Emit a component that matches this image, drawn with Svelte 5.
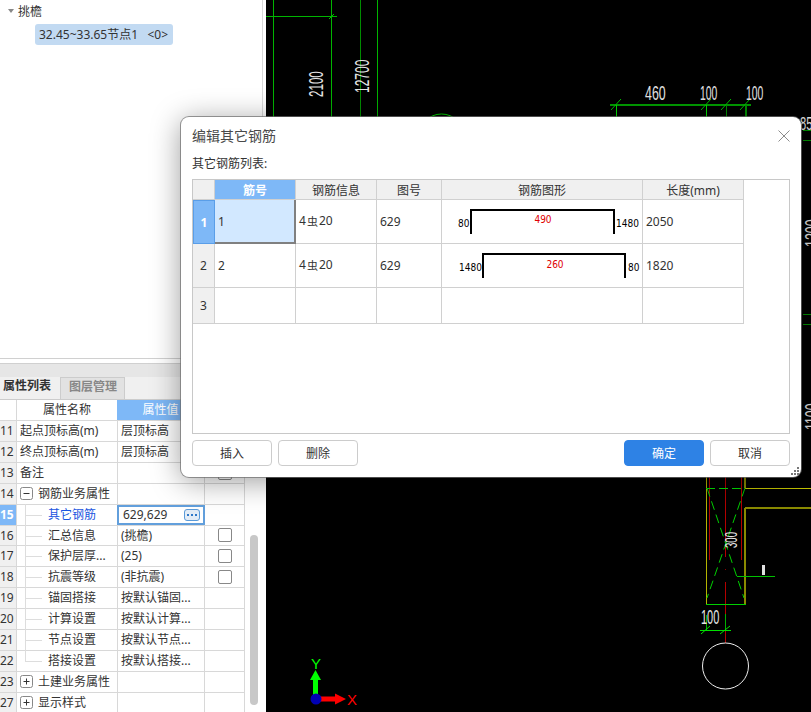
<script>
  const props = [
    { no: 11, name: '起点顶标高(m)', val: '层顶标高' },
    { no: 12, name: '终点顶标高(m)', val: '层顶标高' },
    { no: 13, name: '备注', val: '', check: true },
    { no: 14, group: '钢筋业务属性', open: true },
    { no: 15, sub: '其它钢筋', val: '629,629', active: true },
    { no: 16, sub: '汇总信息', val: '(挑檐)', check: true },
    { no: 17, sub: '保护层厚...', val: '(25)', check: true },
    { no: 18, sub: '抗震等级', val: '(非抗震)', check: true },
    { no: 19, sub: '锚固搭接', val: '按默认锚固...' },
    { no: 20, sub: '计算设置', val: '按默认计算...' },
    { no: 21, sub: '节点设置', val: '按默认节点...' },
    { no: 22, sub: '搭接设置', val: '按默认搭接...', last: true },
    { no: 23, group: '土建业务属性' },
    { no: 27, group: '显示样式' }
  ]

  const bars = [
    { no: 1, id: '1', pic: '629', len: '2050', x1: 29, x2: 172, left: '80', lx: 16, right: '1480', rx: 174, mid: '490', mx: 101, my: 23 },
    { no: 2, id: '2', pic: '629', len: '1820', x1: 41, x2: 183, left: '1480', lx: 17, right: '80', rx: 186, mid: '260', mx: 113, my: 24 }
  ]

  // cad labels, x/y are page coordinates of the baseline start
  const labels = [
    { t: '2100', x: 323, y: 97, rot: true, sx: 0.58 },
    { t: '12700', x: 369, y: 93, rot: true, sx: 0.6 },
    { t: '460', x: 645, y: 100, sx: 0.62 },
    { t: '100', x: 700, y: 100, sx: 0.52 },
    { t: '100', x: 746, y: 100, sx: 0.52 },
    { t: '100', x: 701, y: 624, sx: 0.55 },
    { t: '300', x: 737, y: 548, rot: true, size: 16, sx: 0.6 },
    { t: '85', x: 800, y: 130, size: 18, sx: 0.62 },
    { t: '1200', x: 819, y: 247, rot: true, sx: 0.62 },
    { t: '1100', x: 819, y: 430, rot: true, sx: 0.62 }
  ]

  const ticks = [616, 706, 726, 745]
</script>

<div class="app">
  <aside class="side">
    <div class="tree">
      <div class="tree-root"><i class="tri"></i>挑檐</div>
      <div class="tree-item">32.45~33.65节点1&nbsp;&nbsp;&nbsp;&lt;0&gt;</div>
    </div>

    <div class="split"></div>

    <div class="tabs">
      <div class="tab on">属性列表</div>
      <div class="tab">图层管理</div>
    </div>

    <div class="props">
      <div class="prop-table">
        <div class="prow head">
          <div class="no"></div>
          <div class="name center">属性名称</div>
          <div class="val center sel">属性值</div>
          <div class="chk"></div>
        </div>
        {#each props as p}
          <div class="prow">
            <div class="no" class:cur={p.active}>{p.no}</div>
            {#if p.group}
              <div class="name grp">
                <span class="box">
                  <svg width="13" height="13" viewBox="0 0 13 13">
                    <rect x=".5" y=".5" width="12" height="12" rx="2" fill="#fff" stroke="#888" />
                    <path d="M3.5 6.5h6" stroke="#333" />
                    {#if !p.open}<path d="M6.5 3.5v6" stroke="#333" />{/if}
                  </svg>
                </span>
                {p.group}
              </div>
            {:else if p.sub}
              <div class="name subname" class:link={p.active}>
                <span class="vline" class:end={p.last}></span><span class="hline"></span>{p.sub}
              </div>
            {:else}
              <div class="name">{p.name}</div>
            {/if}
            <div class="val" class:editing={p.active}>
              {p.val || ''}
              {#if p.active}
                <span class="more"><b></b><b></b><b></b></span>
              {/if}
            </div>
            <div class="chk">{#if p.check}<span class="check"></span>{/if}</div>
          </div>
        {/each}
      </div>
      <div class="track"></div>
    </div>
  </aside>

  <main class="canvas">
    <svg width="545" height="712" viewBox="266 0 545 712" shape-rendering="crispEdges">
      <g fill="none" stroke="#00b400">
        <path d="M273.5 0v117M331.5 0v117M377.5 0v117M266 16.5h71" />
        <path d="M360.5 0v117" stroke="#008c00" />
        <path d="M610 104.500h141" stroke="#009c00" stroke-width="2" />
        <path d="M616.500 105v12M706.500 105v12" stroke="#00e000" />
        <path d="M726.500 105v12" stroke="#009000" />
        <path d="M745.500 105v12" stroke="#009000" stroke-width="2" />
        <circle cx="441.500" cy="137" r="23" stroke="#00d000" shape-rendering="auto" />
        {#each ticks as x}
          <path d="M{x - 5} 110l10-11" stroke="#00c000" shape-rendering="auto" />
        {/each}
        <path d="M329 19l5-5" stroke="#00c000" shape-rendering="auto" />
        <path d="M803 130.500h8M803 140.500h8M803 314.500h8M803 324.500h8" stroke="#009000" />
      </g>

      <!-- column at the bottom right -->
      <g fill="none">
        <path d="M706.500 470v134" stroke="#b4b400" />
        <path d="M745 470v18M745 508v96" stroke="#8a8a00" stroke-width="2" />
        <path d="M745 488.500h66" stroke="#c8c800" />
        <path d="M745 508h66" stroke="#8a8a00" stroke-width="2" />
        <path d="M709.500 470v90M741.500 470v90M725.500 470v87M725.500 582v22M725.500 605v9M725.500 630v13" stroke="#b40000" />
        <path d="M725.500 569v1" stroke="#900000" />
        <path d="M706 488.500h39" stroke="#00e000" stroke-dasharray="9 4" />
        <path d="M707 488l37 110M745 488l-38 110" stroke="#00d000" stroke-dasharray="9 5" shape-rendering="auto" />
        <path d="M706 604.500h40" stroke="#00d000" />
        <path d="M737 576.500h38" stroke="#00c000" />
        <path d="M763.500 565v10" stroke="#e0e0e0" stroke-width="3" />
        <path d="M700 630.500h31" stroke="#00e000" />
        <path d="M706.500 615v15M725.500 614v16" stroke="#00b000" />
        <path d="M701 634l9-8M720 634l10-8" stroke="#00e000" shape-rendering="auto" />
        <circle cx="725.500" cy="666" r="23" stroke="#eee" shape-rendering="auto" />
      </g>

      {#each labels as l}
        <text
          class="cad"
          font-size={l.size || 20}
          transform="translate({l.x} {l.y}) {l.rot ? 'rotate(-90)' : ''} scale({l.sx} 1)">{l.t}</text>
      {/each}

      <!-- axis gizmo -->
      <g shape-rendering="auto">
        <path d="M313 699v-19h-3l5.500-10 5.500 10h-3v19z" fill="#00ff00" />
        <path d="M316 696.500h19v-3l11 5.500-11 5.500v-3h-19z" fill="#ff0000" />
        <circle cx="316" cy="699" r="5.500" fill="#0000b4" />
        <text class="axis" x="311" y="669" fill="#00ff00">Y</text>
        <text class="axis" x="347" y="705" fill="#ff0000">X</text>
      </g>
    </svg>
  </main>

  <div class="dialog">
    <div class="dlg-title">
      编辑其它钢筋
      <svg class="close" width="12" height="12" viewBox="0 0 12 12">
        <path d="M.5.5l11 11M11.500.5l-11 11" stroke="#8c8c8c" fill="none" />
      </svg>
    </div>
    <div class="dlg-label">其它钢筋列表:</div>

    <div class="grid-frame">
      <div class="grid">
        <div class="c hd"></div>
        <div class="c hd sel">筋号</div>
        <div class="c hd">钢筋信息</div>
        <div class="c hd">图号</div>
        <div class="c hd">钢筋图形</div>
        <div class="c hd">长度(mm)</div>

        {#each bars as b, i}
          <div class="c rn" class:cur={i === 0}>{b.no}</div>
          <div class="c" class:focus={i === 0}>{b.id}</div>
          <div class="c info">4<span class="rebar">虫</span>20</div>
          <div class="c">{b.pic}</div>
          <div class="c fig">
            <svg width="200" height="43" viewBox="0 0 200 43">
              <path d="M{b.x1} 34V10H{b.x2}V34" fill="none" stroke="#000" stroke-width="2" shape-rendering="crispEdges" />
              <text class="num" x={b.lx} y="27">{b.left}</text>
              <text class="num" x={b.rx} y="27">{b.right}</text>
              <text class="num red" x={b.mx} y={b.my} text-anchor="middle">{b.mid}</text>
            </svg>
          </div>
          <div class="c">{b.len}</div>
        {/each}

        <div class="c rn last">3</div>
        <div class="c last"></div>
        <div class="c last"></div>
        <div class="c last"></div>
        <div class="c last"></div>
        <div class="c last"></div>
      </div>
    </div>

    <div class="dlg-btns">
      <button>插入</button>
      <button>删除</button>
      <span class="spacer"></span>
      <button class="primary">确定</button>
      <button>取消</button>
    </div>

    <svg class="grip" width="8" height="8" viewBox="0 0 8 8" fill="#777">
      <rect x="6" y="0" width="2" height="2" />
      <rect x="3" y="3" width="2" height="2" />
      <rect x="6" y="3" width="2" height="2" />
      <rect x="0" y="6" width="2" height="2" />
      <rect x="3" y="6" width="2" height="2" />
      <rect x="6" y="6" width="2" height="2" />
    </svg>
  </div>
</div>

<style>
  :global(body) {
    margin: 0;
    background: #000;
  }

  .app {
    position: relative;
    display: flex;
    width: 811px;
    height: 712px;
    overflow: hidden;
    font-family: "Noto Sans", "Noto Sans CJK SC", sans-serif;
    font-size: 12px;
    color: #333;
  }

  /* left side */
  .side {
    display: flex;
    flex-direction: column;
    flex: none;
    width: 266px;
    box-sizing: border-box;
    background: #fff;
    padding-right: 3px;
  }

  .tree {
    height: 358px;
    flex: none;
    border-right: 1px solid #d8d8d8;
  }

  .tree-root {
    display: flex;
    align-items: center;
    height: 21px;
    padding-left: 8px;
  }

  .tri {
    width: 0;
    height: 0;
    margin: 1px 4px 0 0;
    border: 3px solid transparent;
    border-top: 4px solid #888;
    border-bottom: 0;
  }

  .tree-item {
    width: 134px;
    height: 21px;
    line-height: 21px;
    margin: 3px 0 0 35px;
    padding-left: 4px;
    background: #c2daf2;
    border-radius: 3px;
    white-space: nowrap;
  }

  .split {
    flex: none;
    height: 4px;
    border-top: 1px solid #d0d0d0;
    border-bottom: 1px solid #d0d0d0;
  }

  .tabs {
    flex: none;
    display: flex;
    height: 36px;
    box-sizing: border-box;
    padding-top: 13px;
    background: linear-gradient(#e6e6e6 13px, #f0f0f0 13px);
    border-bottom: 1px solid #ccc;
  }

  .tab {
    width: 60px;
    padding-left: 3px;
    box-sizing: border-box;
    line-height: 18px;
    font-weight: 700;
    color: #888;
    background: #e2e2e2;
    border: 1px solid #ccc;
    border-bottom: 0;
  }

  .tab.on {
    width: 60px;
    color: #333;
    background: #f0f0f0;
    border: 0;
  }

  .tab:not(.on) {
    width: 65px;
    padding-left: 8px;
  }

  .props {
    display: flex;
    flex: 1;
    min-height: 0;
  }

  .prop-table {
    width: 245px;
    flex: none;
  }

  .prow {
    display: grid;
    grid-template-columns: 17px 101px 87px 40px;
    height: 20.93px;
    box-sizing: border-box;
    border-bottom: 1px solid #d8d8d8;
    line-height: 19px;
    white-space: nowrap;
  }

  .prow > div {
    box-sizing: border-box;
    border-right: 1px solid #d8d8d8;
    position: relative;
  }

  .no {
    background: #f0f0f0;
    text-align: right;
    padding-right: 4px;
    overflow: hidden;
  }

  .head .no {
    background: #fff;
  }

  .no.cur {
    background: #7eb8f7;
    color: #fff;
    font-weight: 700;
  }

  .name {
    padding-left: 3px;
  }

  .name.center, .val.center {
    text-align: center;
    padding-left: 0;
  }

  .name.grp {
    display: flex;
    align-items: center;
    gap: 5px;
  }

  .box {
    display: flex;
  }

  .subname {
    padding-left: 31px;
  }

  .link {
    color: #1a55e0;
  }

  .vline {
    position: absolute;
    left: 8px;
    top: -1px;
    height: 21px;
    border-left: 1px solid #ddd;
  }

  .vline.end {
    height: 11px;
  }

  .hline {
    position: absolute;
    left: 8px;
    top: 10px;
    width: 17px;
    border-top: 1px solid #ddd;
  }

  .val {
    padding-left: 3px;
  }

  .val.sel {
    margin-left: -1px;
    background: #7eb8f7;
    color: #fff;
    font-weight: 700;
  }

  .head .val.sel {
    font-weight: 400;
  }

  .val.editing {
    display: flex;
    justify-content: space-between;
    align-items: center;
    margin-left: -1px;
    padding: 0 4px 0 6px;
    outline: 2px solid #629fdc;
    outline-offset: -2px;
  }

  .more {
    display: flex;
    align-items: center;
    justify-content: center;
    gap: 2px;
    width: 16px;
    height: 12px;
    box-sizing: border-box;
    background: #e3ecf6;
    border: 1px solid #5a9ad8;
    border-radius: 3px;
  }

  .more b {
    width: 2px;
    height: 2px;
    background: #2f78c8;
  }

  .chk {
    display: flex;
    align-items: center;
    justify-content: center;
  }

  .check {
    width: 14px;
    height: 14px;
    box-sizing: border-box;
    background: #fff;
    border: 1px solid #888;
    border-radius: 2px;
  }

  .track {
    width: 8px;
    height: 170px;
    margin: 135px 0 0 5px;
    background: #c8c8c8;
    border-radius: 4px;
  }

  /* cad canvas */
  .canvas {
    flex: 1;
    background: #000;
  }

  .canvas svg {
    display: block;
  }

  .cad {
    font-family: "Liberation Sans", sans-serif;
    fill: #e4e4e4;
  }

  .axis {
    font-family: "Liberation Sans", sans-serif;
    font-size: 15px;
  }

  /* dialog */
  .dialog {
    position: absolute;
    left: 181px;
    top: 117px;
    width: 620px;
    height: 360px;
    box-sizing: border-box;
    padding: 0 11px;
    background: #fff;
    border-radius: 8px;
    box-shadow: 0 0 0 1px rgba(110, 110, 110, .7), 0 4px 30px rgba(0, 0, 0, .4);
  }

  .dlg-title {
    position: relative;
    height: 38px;
    line-height: 38px;
    font-size: 14px;
    color: #4a4a4a;
  }

  .close {
    position: absolute;
    right: 0;
    top: 13px;
  }

  .dlg-label {
    height: 24px;
    line-height: 18px;
  }

  .grid-frame {
    width: 598px;
    height: 255px;
    box-sizing: border-box;
    border: 1px solid #c8c8c8;
  }

  .grid {
    display: grid;
    grid-template-columns: 22px 81px 81px 65px 201px 101px;
    grid-template-rows: 20px 44px 44px 36px;
  }

  .c {
    box-sizing: border-box;
    display: flex;
    align-items: center;
    padding-left: 3px;
    border-right: 1px solid #d0d0d0;
    border-bottom: 1px solid #d0d0d0;
    min-width: 0;
  }

  .hd {
    justify-content: center;
    padding-left: 0;
    background: #f0f0f0;
  }

  .hd.sel {
    background: #7eb8f7;
    color: #fff;
    font-weight: 700;
  }

  .rn {
    justify-content: center;
    padding-left: 0;
    background: #f0f0f0;
  }

  .rn.cur {
    background: #7eb8f7;
    color: #fff;
    font-weight: 700;
    border: 1px solid #5a9ee8;
  }

  .focus {
    background: #d2e8ff;
    border-right: 2px solid #808080;
    border-bottom: 2px solid #808080;
  }

  .info {
    padding-bottom: 2px;
  }

  .rebar {
    font-size: 11px;
    margin: 0 1px;
  }

  .fig {
    padding-left: 0;
    align-items: flex-start;
  }

  .fig svg {
    display: block;
  }

  .num {
    font-family: "DejaVu Sans Condensed", "DejaVu Sans", sans-serif;
    font-size: 10px;
    fill: #000;
  }

  .num.red {
    fill: #e00000;
  }

  .dlg-btns {
    display: flex;
    gap: 6px;
    margin-top: 6px;
  }

  .spacer {
    flex: 1;
  }

  button {
    width: 80px;
    height: 26px;
    padding: 0;
    font: inherit;
    color: #333;
    background: #fff;
    border: 1px solid #ccc;
    border-radius: 4px;
  }

  button.primary {
    color: #fff;
    background: #2e82e5;
    border-color: #2e82e5;
  }

  .grip {
    position: absolute;
    right: 2px;
    bottom: 2px;
  }
</style>
